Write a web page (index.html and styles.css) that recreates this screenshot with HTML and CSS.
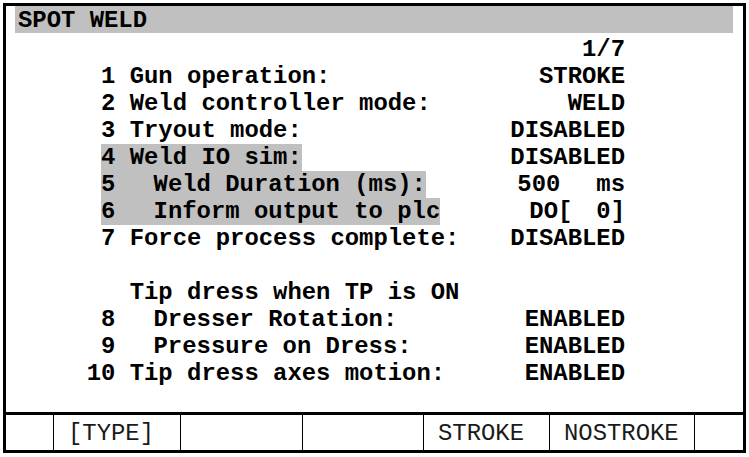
FILE: index.html
```html
<!DOCTYPE html>
<html>
<head>
<meta charset="utf-8">
<link rel="stylesheet" href="styles.css">
</head>
<body>
<div class="screen">
  <div class="main">
    <div class="title">SPOT WELD</div>
    <div class="rows">
      <div class="row"><span class="lbl"></span><span class="val">1/7</span></div>
      <div class="row"><span class="lbl">      1 Gun operation:</span><span class="val">STROKE</span></div>
      <div class="row"><span class="lbl">      2 Weld controller mode:</span><span class="val">WELD</span></div>
      <div class="row"><span class="lbl">      3 Tryout mode:</span><span class="val">DISABLED</span></div>
      <div class="row"><span class="lbl">      <span class="hl">4 Weld IO sim:</span></span><span class="val">DISABLED</span></div>
      <div class="row"><span class="lbl">      <span class="hl">5  <span class="sub">Weld Duration (ms):</span></span></span><span class="val">500<span class="unit">ms</span></span></div>
      <div class="row"><span class="lbl">      <span class="hl">6  <span class="sub">Inform output to plc</span></span></span><span class="val">DO[<span class="idx">0]</span></span></div>
      <div class="row"><span class="lbl">      7 Force process complete:</span><span class="val">DISABLED</span></div>
      <div class="row"><span class="lbl"></span><span class="val"></span></div>
      <div class="row"><span class="lbl">        Tip dress when TP is ON</span><span class="val"></span></div>
      <div class="row"><span class="lbl">      8  <span class="sub">Dresser Rotation:</span></span><span class="val">ENABLED</span></div>
      <div class="row"><span class="lbl">      9  <span class="sub">Pressure on Dress:</span></span><span class="val">ENABLED</span></div>
      <div class="row"><span class="lbl">     10 Tip dress axes motion:</span><span class="val">ENABLED</span></div>
    </div>
  </div>
  <div class="fkeys">
    <div class="fk"></div>
    <div class="fk">[TYPE]</div>
    <div class="fk"></div>
    <div class="fk"></div>
    <div class="fk">STROKE</div>
    <div class="fk">NOSTROKE</div>
    <div class="fk"></div>
  </div>
</div>
</body>
</html>
```
FILE: styles.css
```css
html, body {
  margin: 0;
  padding: 0;
  background: #ffffff;
}
body {
  width: 749px;
  height: 457px;
  overflow: hidden;
  font-family: "Liberation Mono", "Courier New", monospace;
  color: #000000;
}
.screen {
  box-sizing: border-box;
  margin: 3px 0 0 3px;
  width: 743px;
  height: 450px;
  border: 3px solid #000000;
  display: flex;
  flex-direction: column;
}
.main {
  flex: 1;
}
.title {
  box-sizing: border-box;
  margin: 0 10px 0 9px;
  height: 27px;
  line-height: 27px;
  padding: 1px 0 0 3px;
  background: #c0c0c0;
  font-weight: bold;
  font-size: 23.9px;
  white-space: pre;
}
.rows {
  padding-top: 3px;
  font-weight: bold;
  font-size: 23.9px;
}
.row {
  display: flex;
  justify-content: space-between;
  height: 27px;
  line-height: 27px;
  padding-left: 9px;
  padding-right: 118px;
  white-space: pre;
}
.hl {
  display: inline-block;
  height: 27px;
  background: #c0c0c0;
}
.sub {
  padding-left: 9.5px;
}
.unit {
  margin-left: 36px;
}
.idx {
  margin-left: 24px;
}
.fkeys {
  box-sizing: border-box;
  height: 38px;
  border-top: 3px solid #000000;
  display: grid;
  grid-template-columns: 47px 127px 122px 121px 126px 145px 49px;
}
.fk {
  box-sizing: border-box;
  padding: 2px 0 0 14px;
  line-height: 33px;
  font-size: 23.9px;
  font-weight: normal;
  color: #1a1a1a;
  white-space: pre;
}
.fk + .fk {
  border-left: 1px solid #000000;
}
```
